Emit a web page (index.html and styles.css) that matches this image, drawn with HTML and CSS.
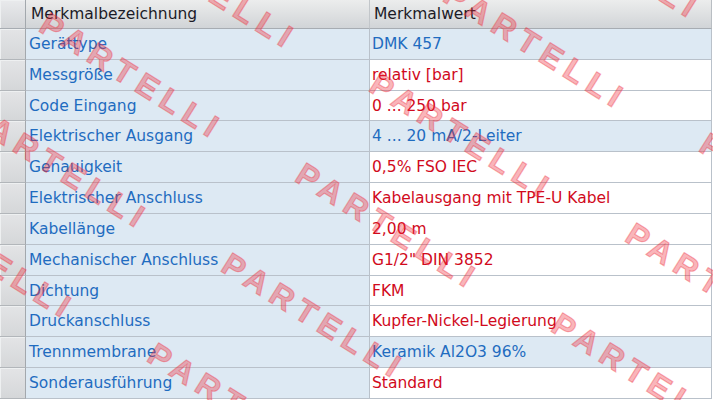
FILE: index.html
```html
<!DOCTYPE html>
<html lang="de">
<head>
<meta charset="utf-8">
<title>Merkmale</title>
<link rel="stylesheet" href="styles.css">
</head>
<body>
<div class="sheet">
  <div class="grid">
    <div class="rh hd"></div><div class="hc">Merkmalbezeichnung</div><div class="hc hc2">Merkmalwert</div>

    <div class="rh"></div><div class="lab">Gerättype</div><div class="val alt">DMK 457</div>
    <div class="rh"></div><div class="lab">Messgröße</div><div class="val">relativ [bar]</div>
    <div class="rh"></div><div class="lab">Code Eingang</div><div class="val">0 ... 250 bar</div>
    <div class="rh"></div><div class="lab">Elektrischer Ausgang</div><div class="val alt">4 ... 20 mA/2-Leiter</div>
    <div class="rh"></div><div class="lab">Genauigkeit</div><div class="val">0,5% FSO IEC</div>
    <div class="rh"></div><div class="lab">Elektrischer Anschluss</div><div class="val">Kabelausgang mit TPE-U Kabel</div>
    <div class="rh"></div><div class="lab">Kabellänge</div><div class="val">2,00 m</div>
    <div class="rh"></div><div class="lab">Mechanischer Anschluss</div><div class="val">G1/2" DIN 3852</div>
    <div class="rh"></div><div class="lab">Dichtung</div><div class="val">FKM</div>
    <div class="rh"></div><div class="lab">Druckanschluss</div><div class="val">Kupfer-Nickel-Legierung</div>
    <div class="rh"></div><div class="lab">Trennmembrane</div><div class="val alt">Keramik Al2O3 96%</div>
    <div class="rh"></div><div class="lab">Sonderausführung</div><div class="val">Standard</div>
  </div>

  <div class="wm" aria-hidden="true">
    <span style="left:117px;top:-85px">PARTELLI</span>
    <span style="left:43px;top:5px">PARTELLI</span>
    <span style="left:-31px;top:95px">PARTELLI</span>
    <span style="left:-105px;top:185px">PARTELLI</span>
    <span style="left:-179px;top:275px">PARTELLI</span>
    <span style="left:521px;top:-115px">PARTELLI</span>
    <span style="left:447px;top:-25px">PARTELLI</span>
    <span style="left:373px;top:65px">PARTELLI</span>
    <span style="left:299px;top:155px">PARTELLI</span>
    <span style="left:225px;top:245px">PARTELLI</span>
    <span style="left:151px;top:335px">PARTELLI</span>
    <span style="left:703px;top:125px">PARTELLI</span>
    <span style="left:629px;top:215px">PARTELLI</span>
    <span style="left:555px;top:305px">PARTELLI</span>
  </div>
</div>
</body>
</html>
```
FILE: styles.css
```css
* { box-sizing: border-box; }
html, body { margin: 0; padding: 0; background: #ffffff; }
body { width: 713px; height: 400px; overflow: hidden; }

.sheet {
  position: relative;
  width: 713px;
  height: 400px;
  overflow: hidden;
  font-family: "DejaVu Sans", Verdana, sans-serif;
  font-size: 15.5px;
}

.grid {
  display: grid;
  grid-template-columns: 26px 344px 342px;
  grid-template-rows: 29px repeat(12, 30.83px);
  width: 712px;
}

.grid > div {
  display: flex;
  align-items: center;
  white-space: nowrap;
  overflow: hidden;
  border-bottom: 1px solid #b9c1ca;
}

.rh {
  background: linear-gradient(#e3e4e6, #d5d7d9);
  border-right: 1px solid #a3a8ad;
  box-shadow: inset 1px 1px 0 #eef0f1;
  border-bottom-color: #b2b6ba !important;
}

.rh.hd {
  background: linear-gradient(#e9eaec, #d3d5d8);
  border-bottom-color: #a7acb2 !important;
}

.hc {
  background: linear-gradient(#eceded, #d1d4d7);
  color: #1b1b27;
  padding-left: 5px;
  border-right: 1px solid #c2c6ca;
  border-bottom-color: #a7acb2 !important;
}

.hc2 { padding-left: 4px; border-right-color: #b9bec3; }

.lab {
  background: #dde9f3;
  color: #1f6cc0;
  padding-left: 3px;
  border-right: 1px solid #b9c1ca;
}

.val {
  background: #ffffff;
  color: #d10a1c;
  padding-left: 2px;
  border-right: 1px solid #b9c1ca;
}

.val.alt {
  background: #dde9f3;
  color: #1f6cc0;
}

.wm {
  position: absolute;
  inset: 0;
  pointer-events: none;
}

.wm span {
  position: absolute;
  height: 32px;
  line-height: 32px;
  font-family: "Liberation Sans", Arial, sans-serif;
  font-weight: bold;
  font-size: 32px;
  letter-spacing: 7px;
  color: rgba(238, 40, 55, 0.36);
  -webkit-text-stroke: 1.2px rgba(238, 40, 55, 0.36);
  white-space: nowrap;
  transform-origin: 0 50%;
  transform: rotate(32deg);
}
```
